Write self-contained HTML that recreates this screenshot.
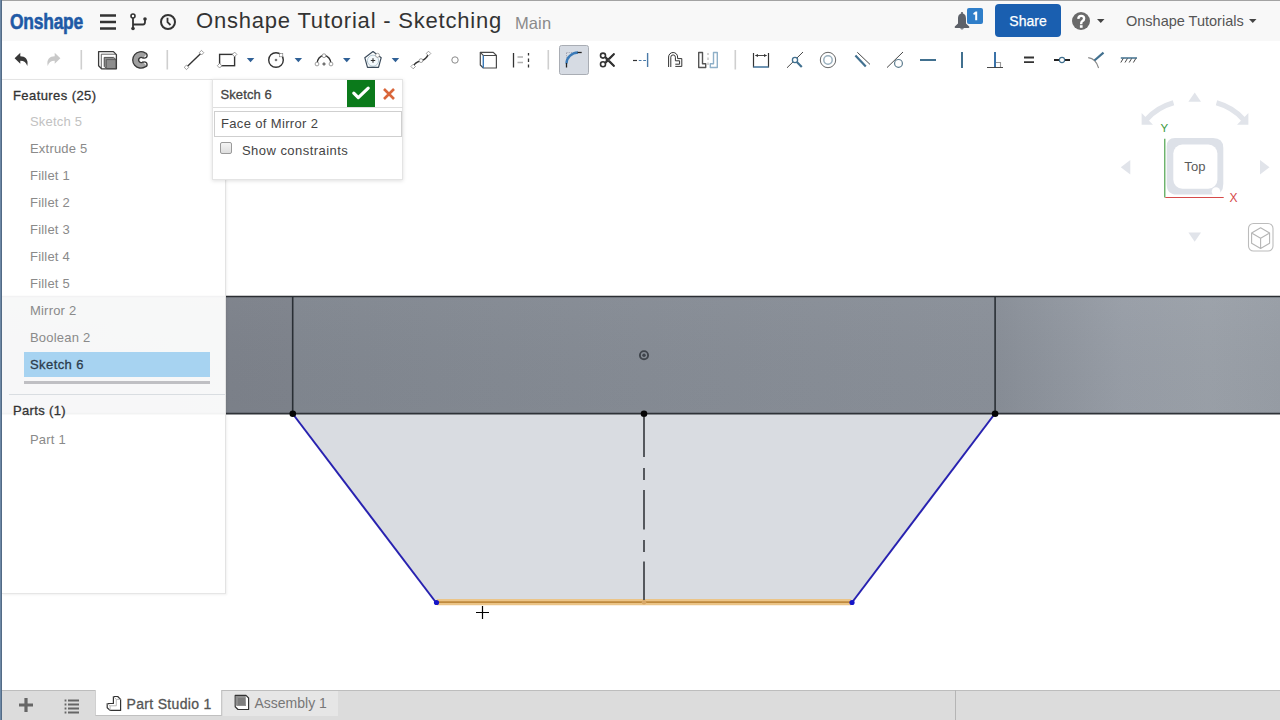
<!DOCTYPE html>
<html><head><meta charset="utf-8">
<style>
*{margin:0;padding:0;box-sizing:border-box}
html,body{width:1280px;height:720px;overflow:hidden;background:#fff;font-family:"Liberation Sans",sans-serif}
.a{position:absolute}
.t{position:absolute;white-space:nowrap;line-height:1}
svg{position:absolute;overflow:visible}
</style></head><body>
<!-- canvas -->
<div class="a" id="canvas" style="left:0;top:0;width:1280px;height:720px;background:#fff"></div>
<svg width="1280" height="720" style="left:0;top:0">
  <defs>
    <linearGradient id="bL" x1="0" y1="0" x2="1" y2="0">
      <stop offset="0" stop-color="#787d86"/><stop offset="1" stop-color="#7d828b"/>
    </linearGradient>
    <linearGradient id="bM" x1="0" y1="0" x2="1" y2="0">
      <stop offset="0" stop-color="#80868f"/><stop offset="0.5" stop-color="#858b94"/><stop offset="1" stop-color="#898f98"/>
    </linearGradient>
    <linearGradient id="bR" x1="0" y1="0" x2="1" y2="0">
      <stop offset="0" stop-color="#878d96"/><stop offset="0.45" stop-color="#979da6"/><stop offset="0.75" stop-color="#9aa0a8"/><stop offset="1" stop-color="#979da5"/>
    </linearGradient>
    <linearGradient id="bV" x1="0" y1="0" x2="0" y2="1">
      <stop offset="0" stop-color="#fff" stop-opacity="0.03"/><stop offset="1" stop-color="#000" stop-opacity="0.01"/>
    </linearGradient>
  </defs>
  <rect x="0" y="296" width="292.5" height="117.5" fill="url(#bL)"/><rect x="292.5" y="296" width="702.5" height="117.5" fill="url(#bM)"/><rect x="995" y="296" width="285" height="117.5" fill="url(#bR)"/><rect x="0" y="296" width="1280" height="117.5" fill="url(#bV)"/>
  <polygon points="292.5,413.5 995,413.5 852,602.5 436,602.5" fill="#d9dce1"/>
  <line x1="0" y1="296.5" x2="1280" y2="296.5" stroke="#2b2e33" stroke-width="1.3"/>
  <line x1="0" y1="413.6" x2="1280" y2="413.6" stroke="#2f3338" stroke-width="1.7"/>
  <line x1="292.7" y1="296" x2="292.7" y2="413.5" stroke="#2a2f35" stroke-width="1.6"/>
  <line x1="995.1" y1="296" x2="995.1" y2="413.5" stroke="#2a2f35" stroke-width="1.6"/>
  <line x1="292.5" y1="413.5" x2="436" y2="602.5" stroke="#2822b0" stroke-width="2"/>
  <line x1="995" y1="413.5" x2="852" y2="602.5" stroke="#2822b0" stroke-width="2"/>
  <line x1="437" y1="602.2" x2="851" y2="602.2" stroke="#ebc487" stroke-width="6.2"/>
  <line x1="437" y1="602.2" x2="851" y2="602.2" stroke="#bf8a3e" stroke-width="1.7"/>
  <path d="M644 417V457M644 468V480M644 490V529.5M644 540V552M644 561.5V600" stroke="#55585d" stroke-width="2"/>
  <circle cx="292.8" cy="413.7" r="3.3" fill="#050505"/>
  <circle cx="644" cy="413.7" r="3.3" fill="#050505"/>
  <circle cx="995.1" cy="413.7" r="3.3" fill="#050505"/>
  <circle cx="436.5" cy="602.5" r="2.6" fill="#1515c8"/>
  <circle cx="852" cy="602.5" r="2.6" fill="#1515c8"/>
  <circle cx="644" cy="355.2" r="4.1" fill="none" stroke="#3f444b" stroke-width="1.9"/>
  <circle cx="644" cy="355.2" r="1.7" fill="#3f444b"/>
  <circle cx="644" cy="602.2" r="2.2" fill="#d8a868"/>
  <path d="M476 612.5H489M482.5 606V619" stroke="#000" stroke-width="1.2"/>
</svg>

<!-- header -->
<div class="a" style="left:0;top:0;width:1280px;height:41px;background:#f8f8f8;border-top:1px solid #a3a3a3"></div>
<div class="a" style="left:0;top:41px;width:1280px;height:39px;background:#ffffff"></div>
<div class="a" style="left:0;top:0;width:2px;height:720px;background:linear-gradient(90deg,#6d88a5 0,#6d88a5 50%,#536b86 50%,#536b86 100%)"></div>


<!-- header content -->
<div class="t" style="left:10px;top:10.5px;font-size:22.5px;font-weight:700;color:#1f5aa6;transform:scaleX(0.775);transform-origin:0 0;letter-spacing:-0.3px;-webkit-text-stroke:0.6px #1f5aa6">Onshape</div>
<svg width="20" height="20" style="left:100px;top:13px"><path d="M0 2.5H16M0 9H16M0 15.5H16" stroke="#333" stroke-width="2.6"/></svg>
<svg width="20" height="20" style="left:130px;top:13px">
 <circle cx="3" cy="3" r="2" fill="#fff" stroke="#333" stroke-width="1.6"/>
 <circle cx="3" cy="15.5" r="1.8" fill="#333"/>
 <circle cx="15" cy="6" r="1.8" fill="#333"/>
 <path d="M3 5V15.5M3 11.5H13Q15 11.5 15 9V6" fill="none" stroke="#333" stroke-width="1.8"/>
</svg>
<svg width="20" height="20" style="left:160px;top:14px">
 <circle cx="8" cy="8" r="7" fill="none" stroke="#333" stroke-width="2"/>
 <path d="M7.5 3.8V8.2L10.5 11" fill="none" stroke="#333" stroke-width="1.8"/>
</svg>
<div class="t" style="left:196px;top:10px;font-size:22px;color:#333;letter-spacing:0.8px">Onshape Tutorial - Sketching</div>
<div class="t" style="left:515px;top:15px;font-size:16.5px;color:#8a8a8a;letter-spacing:0.1px">Main</div>
<svg width="20" height="22" style="left:953px;top:11px">
 <circle cx="9" cy="2" r="1.1" fill="#5d6169"/>
 <path d="M9 2.6C6 2.6 5 5 5 7.8V12.6L1.8 15.6Q1.2 16.7 2.4 17H15.6Q16.8 16.7 16.2 15.6L13 12.6V7.8C13 5 12 2.6 9 2.6Z" fill="#5d6169"/>
 <path d="M7 17.2Q9 19.8 11 17.2Z" fill="#5d6169"/>
</svg>
<div class="a" style="left:967px;top:8px;width:16px;height:16px;background:#2f7ec9;border-radius:2px"></div>
<svg width="16" height="16" style="left:967px;top:8px"><path d="M6.2 5.2L8.6 3.4H10.2V12.3H8.2V6.2L6.9 7Z" fill="#fff"/></svg>
<div class="a" style="left:995px;top:4px;width:66px;height:33px;background:#1a5fb0;border-radius:4px"></div>
<div class="t" style="left:995px;top:14px;width:66px;text-align:center;font-size:14px;color:#fff;-webkit-text-stroke:0.25px #fff">Share</div>
<svg width="20" height="20" style="left:1072px;top:12px">
 <circle cx="9" cy="9" r="9" fill="#6a6a6a"/>
</svg>
<svg width="20" height="20" style="left:1072px;top:12px"><path d="M6.3 6.8Q6.5 3.9 9.2 3.9Q12 3.9 12.1 6.4Q12.1 8 10.5 9Q9.2 9.8 9.2 11.5V12.2" fill="none" stroke="#fff" stroke-width="2.4"/><rect x="7.9" y="13.2" width="2.7" height="2.6" fill="#fff"/></svg>
<svg width="10" height="6" style="left:1097px;top:18.5px"><path d="M0 0H7.5L3.75 4Z" fill="#444"/></svg>
<div class="t" style="left:1126px;top:14px;font-size:14.5px;color:#555">Onshape Tutorials</div>
<svg width="10" height="6" style="left:1249px;top:18.5px"><path d="M0 0H7.5L3.75 4Z" fill="#444"/></svg>

<!-- toolbar -->
<svg width="1280" height="80" style="left:0;top:0">
 <g id="tb">
 <!-- undo -->
 <path d="M14.6 58.3L20.3 52.8V56.3C25 56.3 28.8 59.2 27.3 66C26.2 62.6 24.2 60.8 20.3 60.8V63.8Z" fill="#383838"/>
 <path d="M60.4 58.3L54.7 52.8V56.3C50 56.3 46.2 59.2 47.7 66C48.8 62.6 50.8 60.8 54.7 60.8V63.8Z" fill="#c9c9c9"/>
 <rect x="80.5" y="50" width="1.6" height="19.5" fill="#cfcfcf"/>
 <!-- part studio icon -->
 <path d="M98.6 51.6H113.4L116.4 54.6V68.8H101.6L98.6 65.8Z" fill="#fff" stroke="#3a3a3a" stroke-width="1.3" stroke-linejoin="round"/>
 <path d="M101.3 68.3V54.2H116" fill="none" stroke="#555" stroke-width="0.9"/>
 <path d="M104.2 57.4H113.6L116 59.6V68.6H106.4L104.2 66.4Z" fill="#8d8d8d" stroke="#444" stroke-width="0.9"/>
 <path d="M106.3 68.4V59.6H116" fill="none" stroke="#555" stroke-width="0.8"/>
 <!-- shell C icon -->
 <path d="M145.2 52.9A8.2 8.2 0 1 0 145.2 66.9A2.4 2.4 0 0 0 144 62.1L142.8 61.9A2.5 2.5 0 1 1 142.8 58.1L144 57.9A2.4 2.4 0 0 0 145.2 52.9Z" fill="#a0a0a0" stroke="#383838" stroke-width="1.3" stroke-linejoin="round"/>
 <ellipse cx="145.2" cy="56.3" rx="1.4" ry="0.6" transform="rotate(-50 145.2 56.3)" fill="#fff"/>
 <ellipse cx="145.2" cy="63.7" rx="1.4" ry="0.6" transform="rotate(50 145.2 63.7)" fill="#fff"/>
 <rect x="166.5" y="50" width="1.6" height="19.5" fill="#cfcfcf"/>
 <!-- line -->
 <line x1="186.5" y1="67.3" x2="201.5" y2="52.7" stroke="#333" stroke-width="1.4"/>
 <path d="M186.5 65L188.8 67.3L186.5 69.6L184.2 67.3Z M201.5 50.4L203.8 52.7L201.5 55L199.2 52.7Z" fill="#fff" stroke="#777" stroke-width="0.7"/>
 <!-- rect -->
 <rect x="219.6" y="54.4" width="15" height="11.3" fill="none" stroke="#333" stroke-width="1.4"/>
 <path d="M234.6 52.1L236.9 54.4L234.6 56.7L232.3 54.4Z M219.6 63.4L221.9 65.7L219.6 68L217.3 65.7Z" fill="#fff" stroke="#777" stroke-width="0.7"/>
 <path d="M246.8 58H254.3L250.55 62.3Z" fill="#2f6096"/>
 <!-- circle -->
 <circle cx="276" cy="60" r="7.3" fill="none" stroke="#333" stroke-width="1.4"/>
 <circle cx="276" cy="60" r="1.3" fill="#777"/>
 <rect x="279.5" y="53.5" width="3.3" height="3.3" fill="#fff" stroke="#777" stroke-width="0.6"/>
 <path d="M294.6 58H302.1L298.35 62.3Z" fill="#2f6096"/>
 <!-- arc -->
 <path d="M317 64A7 8.5 0 0 1 331 64" fill="none" stroke="#333" stroke-width="1.4"/>
 <circle cx="317" cy="64" r="1.9" fill="#fff" stroke="#777" stroke-width="0.7"/>
 <circle cx="324" cy="55.7" r="1.9" fill="#fff" stroke="#777" stroke-width="0.7"/>
 <circle cx="331" cy="64" r="1.9" fill="#fff" stroke="#777" stroke-width="0.7"/>
 <path d="M322.3 64H325.7M324 62.3V65.7" stroke="#444" stroke-width="1"/>
 <path d="M343 58H350.5L346.75 62.3Z" fill="#2f6096"/>
 <!-- polygon -->
 <circle cx="373" cy="60.7" r="5.6" fill="#f4f9fc" stroke="#a9bfcd" stroke-width="0.9"/>
 <path d="M373 51.6L381.2 57.7L378.5 67.3H367.5L364.8 57.7Z" fill="none" stroke="#3b4b5b" stroke-width="1.2" stroke-linejoin="round"/>
 <path d="M370.8 60.5H375.2M373 58.3V62.7" stroke="#333" stroke-width="1.1"/>
 <circle cx="377.5" cy="55.3" r="2" fill="#fff" stroke="#888" stroke-width="0.7"/>
 <path d="M391.7 58H399.2L395.45 62.3Z" fill="#2f6096"/>
 <!-- spline -->
 <path d="M413.2 66.5C415 62 418.5 61.5 421 60.8C424 60 427 58 428.5 53.5" fill="none" stroke="#333" stroke-width="1.4"/>
 <path d="M413.2 64.2L415.5 66.5L413.2 68.8L410.9 66.5Z M428.5 51.2L430.8 53.5L428.5 55.8L426.2 53.5Z" fill="#fff" stroke="#777" stroke-width="0.7"/>
 <circle cx="421" cy="60.6" r="1.9" fill="#fff" stroke="#777" stroke-width="0.7"/>
 <!-- point -->
 <circle cx="455" cy="60" r="3.2" fill="#fff" stroke="#8a8a8a" stroke-width="1"/>
 <!-- use -->
 <path d="M480.3 52.4H493.3L496.4 55.5V68H483.3L480.3 65Z" fill="#fff" stroke="#4a4a4a" stroke-width="1.2" stroke-linejoin="round"/>
 <path d="M480.3 52.4L483.3 55.5H496.4" fill="none" stroke="#4a4a4a" stroke-width="1.1"/>
 <path d="M483.3 55.5V68" stroke="#3a7ab8" stroke-width="1.4"/>
 <!-- construction -->
 <path d="M513.5 53V67.5" stroke="#333" stroke-width="1.3"/>
 <path d="M517.5 57H523M517.5 62.5H523" stroke="#b0b0b0" stroke-width="1.3"/>
 <path d="M528.5 53V55.5M528.5 58.5V62M528.5 64.5V67.5" stroke="#333" stroke-width="1.3"/>
 <rect x="547.5" y="50" width="1.6" height="19.5" fill="#cfcfcf"/>
 <!-- fillet active -->
 <rect x="559.5" y="45.5" width="29" height="29" rx="2" fill="#d6dbe3" stroke="#a9adb4" stroke-width="1"/>
 <path d="M566.5 52.5H572M566.5 53V58" stroke="#9a9aa8" stroke-width="0.9" stroke-dasharray="1 1.2"/>
 <path d="M566.5 63.5A12 11 0 0 1 578 52.5" fill="none" stroke="#3a7ab8" stroke-width="2.4"/>
 <path d="M566.5 63V67.5" stroke="#222" stroke-width="1.3"/>
 <path d="M577.5 52.5H581.7" stroke="#222" stroke-width="1.3"/>
 <!-- scissors -->
 <circle cx="603" cy="55.6" r="2.5" fill="none" stroke="#333" stroke-width="1.6"/>
 <circle cx="603" cy="64.2" r="2.5" fill="none" stroke="#333" stroke-width="1.6"/>
 <path d="M604.6 57.6L606.2 56.4L615 65.6L613.8 66.8Z M604.6 62.4L606.2 63.6L615 54.4L613.8 53.2Z" fill="#333"/>
 <path d="M606 58.6L613.9 66.2M606 61.4L613.9 53.8" stroke="#333" stroke-width="1.6" stroke-linecap="round"/>
 <!-- extend -->
 <path d="M633 60.5H637" stroke="#333" stroke-width="1.2"/>
 <path d="M638.8 60.5H641.5M643.2 60.5H646" stroke="#4a7aa8" stroke-width="1.2"/>
 <path d="M647.6 53V67" stroke="#4a7aa8" stroke-width="1.4"/>
 <!-- offset -->
 <path d="M668.6 67V57A4.5 4.5 0 0 1 677.6 57V58.6H681.8V66.4H675.3" fill="none" stroke="#333" stroke-width="1"/>
 <path d="M670.8 67V57.2A2.3 2.3 0 0 1 675.4 57.2V60.8H679.6V64.2H675.3" fill="none" stroke="#333" stroke-width="1"/>
 <!-- mirror -->
 <path d="M698.7 52.5H702.5V63.8H705.7V67.5H698.7Z" fill="none" stroke="#555" stroke-width="1.4" stroke-linejoin="round"/>
 <path d="M708 53V55M708 57.5V60M708 62.5V65" stroke="#aaa" stroke-width="1"/>
 <path d="M717.3 52.5H713.5V63.8H710.3V67.5H717.3Z" fill="none" stroke="#8fb0c8" stroke-width="1.4" stroke-linejoin="round"/>
 <rect x="734.5" y="50" width="1.6" height="19.5" fill="#cfcfcf"/>
 <!-- dimension -->
 <path d="M753.5 53V67.5M768.5 53V67.5" stroke="#333" stroke-width="1.2"/>
 <path d="M753.5 67H768.5" stroke="#4a7aa0" stroke-width="1.6"/>
 <path d="M755.5 55.5H766.5" stroke="#333" stroke-width="0.9"/>
 <path d="M755 55.5L758 54V57Z M767 55.5L764 54V57Z" fill="#333"/>
 <!-- coincident -->
 <path d="M787 67.8L803 52" stroke="#333" stroke-width="0.9"/>
 <path d="M796.6 61.8L801.8 67" stroke="#41708f" stroke-width="2.2"/>
 <circle cx="795" cy="60" r="2.6" fill="#fff" stroke="#41708f" stroke-width="1.3"/>
 <!-- concentric -->
 <circle cx="828" cy="60" r="7.7" fill="none" stroke="#666" stroke-width="1"/>
 <circle cx="828" cy="60" r="4.2" fill="none" stroke="#9ab0be" stroke-width="1.5"/>
 <!-- parallel -->
 <path d="M855.4 55.4L865.8 66.4" stroke="#41708f" stroke-width="2.2"/>
 <path d="M857.3 52.3L870 64.4" stroke="#333" stroke-width="0.9"/>
 <!-- tangent -->
 <path d="M887 67.6L903 52" stroke="#333" stroke-width="0.9"/>
 <circle cx="898.5" cy="63.4" r="3.9" fill="none" stroke="#5a7a8c" stroke-width="1.2"/>
 <!-- horizontal -->
 <path d="M920 60H936" stroke="#41708f" stroke-width="2"/>
 <!-- vertical -->
 <path d="M962 52V68" stroke="#41708f" stroke-width="2"/>
 <!-- perpendicular -->
 <path d="M996 62.5H1000.5V67.3" fill="none" stroke="#999" stroke-width="1.1"/>
 <path d="M995 52V67.5" stroke="#3a72a8" stroke-width="2"/>
 <path d="M987 67.5H1003" stroke="#333" stroke-width="0.9"/>
 <!-- equal -->
 <path d="M1024 57.5H1034M1024 62.2H1034" stroke="#333" stroke-width="1.8"/>
 <!-- midpoint -->
 <path d="M1054 60H1059.5M1064.5 60H1070" stroke="#222" stroke-width="2"/>
 <circle cx="1062" cy="60" r="2.6" fill="#fff" stroke="#41708f" stroke-width="1.1"/>
 <!-- curvature -->
 <path d="M1088.2 57.6Q1096 58.5 1098.6 68" fill="none" stroke="#888" stroke-width="1.1"/>
 <path d="M1094.4 60.5L1103.5 52.6" stroke="#41708f" stroke-width="2.2"/>
 <!-- fix -->
 <path d="M1120.8 58H1137" stroke="#41708f" stroke-width="1.5"/>
 <path d="M1123.2 58.5L1120.8 62.5M1127.4 58.5L1125 62.5M1131.6 58.5L1129.2 62.5M1135.8 58.5L1133.4 62.5" stroke="#333" stroke-width="0.9"/>
 </g>
</svg>

<!-- left panel -->
<div class="a" style="left:2px;top:79px;width:224px;height:515px;background:rgba(255,255,255,0.94);border-top:1px solid #e4e4e4;border-right:1px solid #e3e3e3;border-bottom:1px solid #e6e6e6;box-shadow:1px 1px 2px rgba(0,0,0,0.06)"></div>

<div class="t" style="left:13px;top:88.5px;font-size:13px;color:#333;letter-spacing:0.42px;-webkit-text-stroke:0.3px #333">Features (25)</div>
<div class="t" style="left:30px;top:114.5px;font-size:13px;color:#c2c2c2;letter-spacing:0.2px">Sketch 5</div>
<div class="t" style="left:30px;top:141.5px;font-size:13px;color:#8a8a8a;letter-spacing:0.2px">Extrude 5</div>
<div class="t" style="left:30px;top:168.5px;font-size:13px;color:#8a8a8a;letter-spacing:0.2px">Fillet 1</div>
<div class="t" style="left:30px;top:195.5px;font-size:13px;color:#8a8a8a;letter-spacing:0.2px">Fillet 2</div>
<div class="t" style="left:30px;top:222.5px;font-size:13px;color:#8a8a8a;letter-spacing:0.2px">Fillet 3</div>
<div class="t" style="left:30px;top:249.5px;font-size:13px;color:#8a8a8a;letter-spacing:0.2px">Fillet 4</div>
<div class="t" style="left:30px;top:276.5px;font-size:13px;color:#8a8a8a;letter-spacing:0.2px">Fillet 5</div>
<div class="t" style="left:30px;top:303.5px;font-size:13px;color:#8a8a8a;letter-spacing:0.2px">Mirror 2</div>
<div class="t" style="left:30px;top:330.5px;font-size:13px;color:#8a8a8a;letter-spacing:0.2px">Boolean 2</div>
<div class="a" style="left:24px;top:352px;width:186px;height:25px;background:#a7d3f1"></div>
<div class="t" style="left:30px;top:357.5px;font-size:13px;color:#2c3c4c;letter-spacing:0.42px;-webkit-text-stroke:0.3px #2c3c4c">Sketch 6</div>
<div class="a" style="left:24px;top:381px;width:186px;height:3px;background:#bfbfc3"></div>
<div class="a" style="left:9px;top:394px;width:216px;height:1px;background:#d9dde1"></div>
<div class="t" style="left:13px;top:403.5px;font-size:13px;color:#333;letter-spacing:0.35px;-webkit-text-stroke:0.3px #333">Parts (1)</div>
<div class="t" style="left:30px;top:432.5px;font-size:13px;color:#8a8a8a;letter-spacing:0.2px">Part 1</div>

<!-- sketch dialog -->
<div class="a" style="left:212px;top:79px;width:191px;height:101px;background:#fff;border:1px solid #e4e4e4;box-shadow:0 1px 4px rgba(0,0,0,0.13)"></div>
<div class="a" style="left:213px;top:107px;width:190px;height:1px;background:#dedede"></div>
<div class="t" style="left:220.5px;top:88px;font-size:13px;color:#444;letter-spacing:0.1px;-webkit-text-stroke:0.3px #444">Sketch 6</div>
<div class="a" style="left:347px;top:80px;width:28px;height:27px;background:#0b7a1b"></div>
<svg width="30" height="30" style="left:347px;top:80px"><path d="M6.8 13.2L11.3 17.6L21.2 8.2" fill="none" stroke="#fff" stroke-width="3.2" stroke-linecap="round" stroke-linejoin="round"/></svg>
<svg width="20" height="20" style="left:383px;top:88px"><path d="M1 1L11 11M11 1L1 11" stroke="#d9663a" stroke-width="2.6"/></svg>
<div class="a" style="left:214px;top:111px;width:188px;height:26px;border:1px solid #cfcfcf;background:#fff"></div>
<div class="t" style="left:221px;top:117px;font-size:13px;color:#444;letter-spacing:0.35px">Face of Mirror 2</div>
<div class="a" style="left:220px;top:142px;width:12px;height:12px;border:1px solid #9a9a9a;border-radius:2px;background:linear-gradient(#f4f4f4,#dedede)"></div>
<div class="t" style="left:242px;top:144px;font-size:13px;color:#444;letter-spacing:0.45px">Show constraints</div>

<!-- navcube -->
<svg width="170" height="170" style="left:1110px;top:86px">
 <g transform="translate(-1110,-86)">
 <path d="M1188.4 101.7L1194.7 92.6L1201 101.7Z" fill="#e1e4ea"/>
 <path d="M1188.4 232.5H1201L1194.7 241.7Z" fill="#e1e4ea"/>
 <path d="M1130.3 160V174.5L1120.8 167.2Z" fill="#e1e4ea"/>
 <path d="M1260 160V174.5L1269.5 167.2Z" fill="#e1e4ea"/>
 <path d="M1173.5 102.8Q1157 107.5 1146.5 119.5" fill="none" stroke="#e1e4ea" stroke-width="5.2"/>
 <path d="M1141.6 113L1141.6 124.7L1153 124.7Z" fill="#e1e4ea"/>
 <path d="M1216.5 102.8Q1233 107.5 1243.5 119.5" fill="none" stroke="#e1e4ea" stroke-width="5.2"/>
 <path d="M1248.4 113L1248.4 124.7L1237 124.7Z" fill="#e1e4ea"/>
 <path d="M1175 138H1213Q1223.3 138 1223.3 148V184Q1223.3 194.6 1213 194.6H1177Q1166.7 194.6 1166.7 184V146.5Q1166.7 138 1175 138Z" fill="#dde1e8"/>
 <rect x="1173.3" y="144.6" width="44.1" height="44.1" rx="9" fill="#fff"/>
 <circle cx="1216" cy="191.5" r="4.3" fill="#fff"/>
 <path d="M1164.8 138.8V197.5" fill="none" stroke="#3d9a3d" stroke-width="1.1"/>
 <path d="M1165.3 197.5H1223.7" stroke="#d64a4a" stroke-width="1.1"/>
 <rect x="1248.5" y="223.5" width="24.5" height="27.5" rx="5" fill="#fff" stroke="#bcbcbc" stroke-width="1.1"/>
 <path d="M1260.6 227.8L1269.6 233V243.2L1260.6 248.4L1251.6 243.2V233Z M1251.6 233L1260.6 238.2L1269.6 233 M1260.6 238.2V248.4" fill="none" stroke="#b5b5b5" stroke-width="1.1" stroke-linejoin="round"/>
 </g>
</svg>
<div class="t" style="left:1160.5px;top:123px;font-size:11.5px;color:#3d9a3d">Y</div>
<div class="t" style="left:1229.5px;top:191.5px;font-size:12px;color:#d64a4a">X</div>
<div class="t" style="left:1173px;top:159.5px;width:44px;text-align:center;font-size:13px;color:#5a5a5a;letter-spacing:0.2px">Top</div>

<!-- bottom bar -->
<div class="a" style="left:2px;top:690px;width:1278px;height:30px;background:#dcdcdc;border-top:1px solid #bdbdbd"></div>
<div class="a" style="left:955px;top:690px;width:1px;height:30px;background:#b5b5b5"></div>
<svg width="20" height="20" style="left:18px;top:697px"><path d="M1 8H15M8 1V15" stroke="#666" stroke-width="3.2"/></svg>
<svg width="20" height="20" style="left:64px;top:697px">
 <path d="M1.5 2.5V4.5M1.5 6.5V8.5M1.5 10.5V12.5M1.5 14.5V16.5" stroke="#666" stroke-width="1.8"/>
 <path d="M4 3.5H15M4 7.5H15M4 11.5H15M4 15.5H15" stroke="#666" stroke-width="2"/>
</svg>
<div class="a" style="left:95px;top:690px;width:127px;height:26px;background:#fff;border-right:1px solid #c8c8c8;border-bottom:1px solid #c0c0c0;border-left:1px solid #d0d0d0"></div>
<svg width="30" height="26" style="left:100px;top:690px">
 <path d="M13.4 6.5H17.7L20.6 9.4V20.4H10.1L7.2 17.7V13.5H13.4Z" fill="#fff" stroke="#333" stroke-width="1.2" stroke-linejoin="round"/>
 <path d="M13.4 6.5L16.3 9.4H20.6M16.3 9.4V15.8H10.1L7.2 13.5M10.1 15.8V20.4" fill="none" stroke="#b0b0b0" stroke-width="0.9"/>
</svg>
<div class="t" style="left:126.5px;top:696.5px;font-size:14px;color:#555;letter-spacing:0.32px;-webkit-text-stroke:0.3px #555">Part Studio 1</div>
<div class="a" style="left:223px;top:691px;width:115px;height:25px;background:#e6e6e6"></div>
<svg width="30" height="26" style="left:228px;top:690px">
 <path d="M7.2 5.4H18L20.6 8V19.5H10L7.2 16.8Z" fill="#fff" stroke="#333" stroke-width="1.2" stroke-linejoin="round"/>
 <path d="M7.8 6H17.8L18 16H8.8L7.8 15Z" fill="#8f8f8f"/>
 <rect x="10" y="8" width="7" height="7" fill="#7d7d7d"/>
</svg>
<div class="t" style="left:254.5px;top:696px;font-size:14px;color:#777">Assembly 1</div>
</body></html>
